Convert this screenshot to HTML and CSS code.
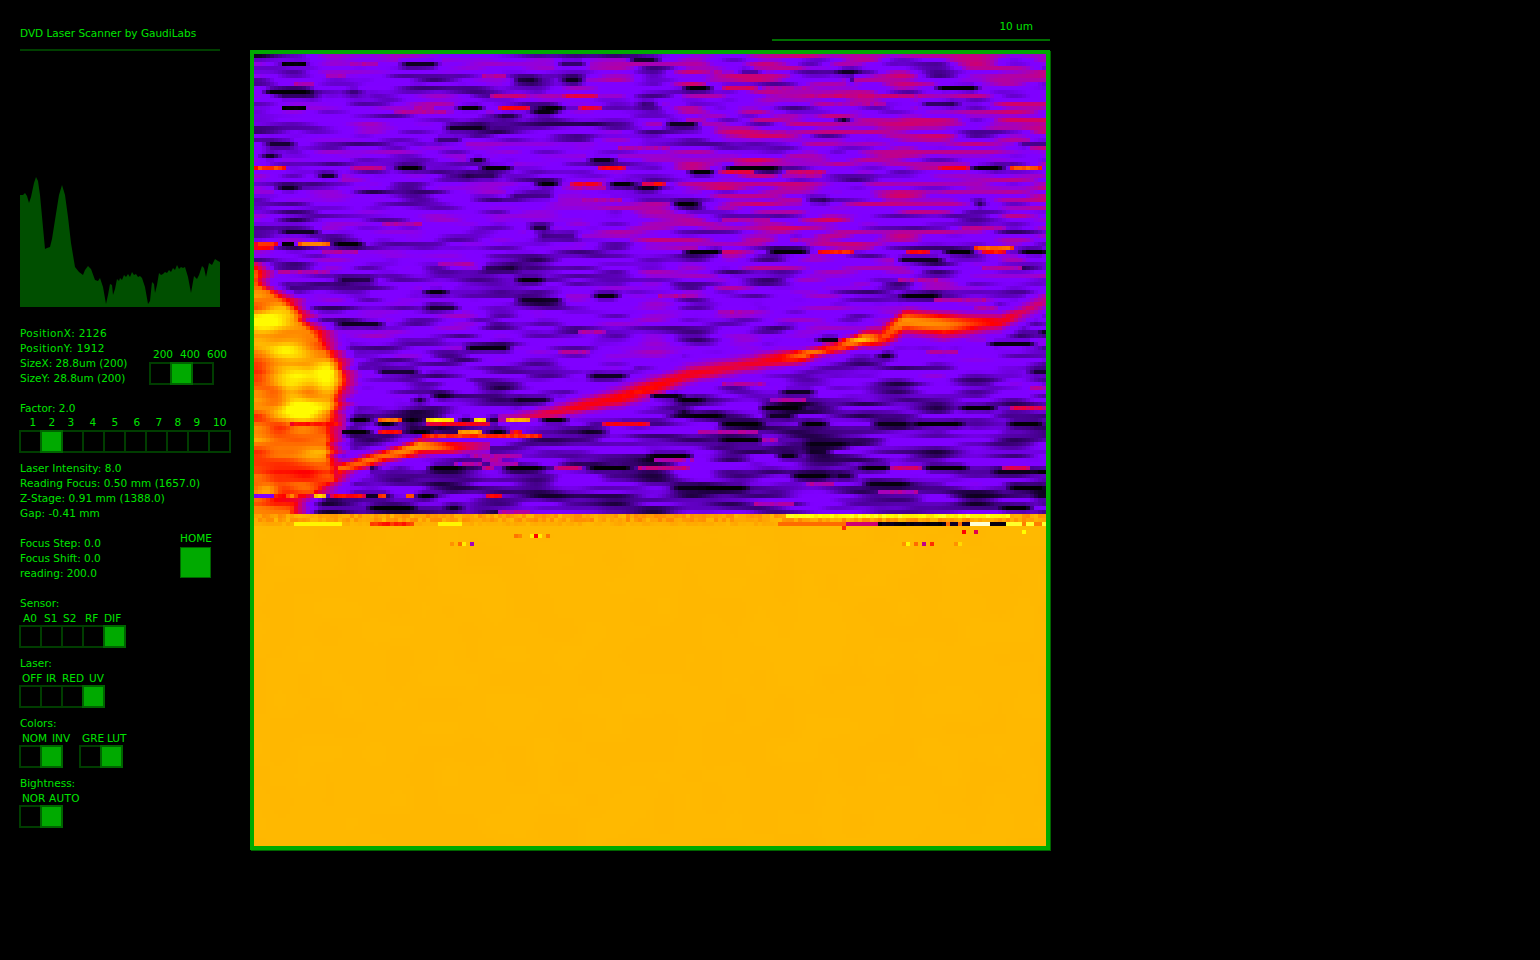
FILE: index.html
```html
<!DOCTYPE html>
<html lang="en">
<head>
<meta charset="UTF-8">
<meta name="viewport" content="width=device-width, initial-scale=1.0">
<title>DVD Laser Scanner by GaudiLabs</title>
<link rel="stylesheet" href="styles.css">
</head>
<body>
<div class="panel">
  <div class="title">DVD Laser Scanner by GaudiLabs</div>
  <svg class="histogram" width="200" height="131" viewBox="0 0 200 131">
    <polygon points="0,18 3,18 5,16 7,19 9,26 11,20 14,6 16,0 18,4 20,18 25,72 27,71 30,70 32,62 35,43 39,18 42,8 45,18 48,40 51,66 55,90 59,95 63,98 65,93 68,89 71,92 75,103 78,104 80,101 83,110 86,127 88,118 90,107 92,108 93,118 95,112 97,102 99,104 100,101 102,103 104,98 106,100 108,97 110,100 112,95 114,98 116,97 118,100 120,99 122,101 125,110 128,127 130,124 132,105 134,107 135,116 137,108 139,96 141,98 143,97 145,95 147,96 149,93 151,95 153,91 155,93 157,88 159,92 161,90 163,91 165,90 168,100 171,116 174,99 177,102 179,98 182,89 184,91 186,100 189,86 192,88 195,82 198,84 200,85 200,130 0,130"/>
  </svg>

  <div class="split">
    <div class="lines stats">
      <div class="spaced">PositionX: 2126</div>
      <div class="spaced">PositionY: 1912</div>
      <div>SizeX: 28.8um (200)</div>
      <div>SizeY: 28.8um (200)</div>
    </div>
    <div class="size-control">
      <div class="labels size-labels"><span>200</span><span>400</span><span>600</span></div>
      <div class="toggle"><i></i><i class="on"></i><i></i></div>
    </div>
  </div>

  <div class="lines group">Factor: 2.0</div>
  <div class="labels factor-labels"><span>1</span><span>2</span><span>3</span><span>4</span><span>5</span><span>6</span><span>7</span><span>8</span><span>9</span><span>10</span></div>
  <div class="toggle"><i></i><i class="on"></i><i></i><i></i><i></i><i></i><i></i><i></i><i></i><i></i></div>

  <div class="lines readings">
    <div>Laser Intensity: 8.0</div>
    <div>Reading Focus: 0.50 mm (1657.0)</div>
    <div>Z-Stage: 0.91 mm (1388.0)</div>
    <div>Gap: -0.41 mm</div>
  </div>

  <div class="split focus">
    <div class="lines focus-lines">
      <div>Focus Step: 0.0</div>
      <div>Focus Shift: 0.0</div>
      <div>reading: 200.0</div>
    </div>
    <div class="home">
      <div class="home-label">HOME</div>
      <div class="home-button"></div>
    </div>
  </div>

  <div class="lines group">Sensor:</div>
  <div class="labels sensor-labels"><span>A0</span><span>S1</span><span>S2</span><span>RF</span><span>DIF</span></div>
  <div class="toggle"><i></i><i></i><i></i><i></i><i class="on"></i></div>

  <div class="lines group-tight">Laser:</div>
  <div class="labels laser-labels"><span>OFF</span><span>IR</span><span>RED</span><span>UV</span></div>
  <div class="toggle"><i></i><i></i><i></i><i class="on"></i></div>

  <div class="lines group-tight">Colors:</div>
  <div class="color-groups">
    <div>
      <div class="labels pair-labels"><span>NOM</span><span>INV</span></div>
      <div class="toggle"><i></i><i class="on"></i></div>
    </div>
    <div>
      <div class="labels lut-labels"><span>GRE</span><span>LUT</span></div>
      <div class="toggle"><i></i><i class="on"></i></div>
    </div>
  </div>

  <div class="lines group-tight">Bightness:</div>
  <div class="labels auto-labels"><span>NOR</span><span class="spaced">AUTO</span></div>
  <div class="toggle"><i></i><i class="on"></i></div>
</div>

<div class="viewer">
  <div class="scale">10 um</div>
  <div class="frame"><canvas id="scan" width="792" height="792"></canvas></div>
</div>
<script src="script.js"></script>
</body>
</html>
```

FILE: styles.css
```css
body { margin: 0; background-color: #000; color: #00e400; font-family: "DejaVu Sans", sans-serif; font-size: 10.5px; line-height: 15px; display: flex; min-height: 100vh; }
.panel { width: 230px; padding: 26px 0 0 20px; flex: none; }
.title { width: 200px; padding-bottom: 8px; border-bottom: 2px solid #003f00; box-sizing: content-box; white-space: nowrap; }
.histogram { display: block; margin-top: 126px; }
.histogram polygon { fill: #004f00; }
.split { display: flex; }
.stats { width: 130px; margin-top: 18px; white-space: nowrap; }
.spaced { letter-spacing: 0.35px; }
.size-control { margin-top: 38px; }
.lines { white-space: nowrap; }
.labels { display: grid; grid-auto-flow: column; justify-content: start; line-height: 14px; height: 14px; white-space: nowrap; }
.size-labels { grid-template-columns: 27px 27px auto; padding-left: 3px; height: 16px; line-height: 16px; }
.factor-labels { grid-template-columns: 19px 19px 22px 22px 22px 22px 19px 19px 19.5px auto; padding-left: 9.5px; line-height: 12px; }
.sensor-labels { grid-template-columns: 21px 19px 22px 19px auto; padding-left: 3px; }
.laser-labels { grid-template-columns: 24px 16px 27px auto; padding-left: 2px; }
.pair-labels { grid-template-columns: 30px auto; padding-left: 2px; }
.lut-labels { grid-template-columns: 25px auto; padding-left: 2px; }
.auto-labels { grid-template-columns: 27px auto; padding-left: 2px; }
.toggle { display: flex; margin-left: -1px; }
.toggle i { display: block; flex: none; width: 23px; height: 23px; margin-right: -2px; box-sizing: border-box; border: 2px solid #003d00; }
.toggle i.on { background-color: #00aa00; border-color: #006400; position: relative; }
.group { margin-top: 15px; }
.group-tight { margin-top: 8px; }
.readings { margin-top: 8px; letter-spacing: 0.06px; }
.focus { margin-top: 15px; }
.focus-lines { width: 160px; }
.home { margin-top: -5px; }
.home-label { height: 16px; }
.home-button { width: 31px; height: 31px; box-sizing: border-box; background-color: #00aa00; border: 1px solid #006400; }
.color-groups { display: flex; gap: 20px; width: 120px; }
.color-groups > div { width: 40px; }
.viewer { width: 800px; flex: none; padding-top: 19px; }
.scale { width: 278px; margin-left: auto; padding-bottom: 5px; margin-bottom: 9px; border-bottom: 2px solid #006e00; box-sizing: border-box; height: 22px; text-align: right; padding-right: 17px; }
.frame { width: 792px; height: 792px; border: 4px solid #00aa00; box-shadow: 1px 1px 0 #006400; }
canvas { display: block; }
```

FILE: script.js
```js
// false colour view of one scan, 4px per sample
var canvas = document.getElementById("scan");
var ctx = canvas.getContext("2d");
var COLS = 198, ROWS = 198, CELL = 4;

var stops = [
  [0, 0, 0, 0], [0.12, 20, 0, 44], [0.3, 90, 0, 181], [0.38, 127, 0, 255], [0.44, 128, 0, 255],
  [0.52, 176, 0, 168], [0.6, 224, 0, 80], [0.65, 255, 0, 0], [0.72, 255, 106, 0],
  [0.8, 255, 184, 0], [0.88, 255, 255, 0], [1, 255, 255, 255]
];

function lut(v) {
  v = Math.max(0, Math.min(1, v));
  for (var i = 1; i < stops.length; i++) {
    if (v <= stops[i][0]) {
      var a = stops[i - 1], b = stops[i];
      var t = (v - a[0]) / (b[0] - a[0]);
      return "rgb(" + Math.round(a[1] + (b[1] - a[1]) * t) + "," + Math.round(a[2] + (b[2] - a[2]) * t) + "," + Math.round(a[3] + (b[3] - a[3]) * t) + ")";
    }
  }
  return "#fff";
}

function hash(x, y) {
  var s = Math.sin(x * 127.1 + y * 311.7) * 43758.5453;
  return s - Math.floor(s);
}

function noise(x, y) {
  var ix = Math.floor(x), iy = Math.floor(y);
  var fx = x - ix, fy = y - iy;
  fx = fx * fx * (3 - 2 * fx);
  fy = fy * fy * (3 - 2 * fy);
  var a = hash(ix, iy) + (hash(ix + 1, iy) - hash(ix, iy)) * fx;
  var b = hash(ix, iy + 1) + (hash(ix + 1, iy + 1) - hash(ix, iy + 1)) * fx;
  return a + (b - a) * fy;
}

// page coordinates of the two bright traces: x, y, half width, peak
var traces = [
  [[340, 470, 13, 0.72], [380, 458, 12, 0.72], [420, 447, 13, 0.78], [450, 448, 9, 0.68], [490, 446, 6, 0.52]],
  [[500, 420, 6, 0.54], [560, 410, 11, 0.62], [620, 397, 18, 0.66], [690, 374, 18, 0.64], [735, 365, 14, 0.62],
   [780, 358, 15, 0.66], [805, 355, 13, 0.75], [835, 347, 13, 0.67], [862, 339, 12, 0.82], [880, 338, 18, 0.68],
   [905, 322, 20, 0.76], [945, 326, 22, 0.74], [1000, 322, 15, 0.65], [1046, 300, 12, 0.55]]
];

// right hand edge of the blob on the left, x for each y
var edge = [[262, 254], [285, 270], [300, 290], [318, 305], [345, 334], [380, 346], [420, 338], [455, 336], [480, 345], [500, 310], [512, 300]];

var hot = [
  [268, 322, 28, 11, 0.2], [283, 349, 18, 11, 0.17], [327, 380, 14, 15, 0.17], [300, 375, 18, 11, 0.15],
  [300, 410, 24, 9, 0.2], [290, 392, 14, 10, 0.1], [315, 455, 18, 9, 0.08], [268, 490, 10, 6, 0.08]
];

// y, x0, x1, value
var segs = [
  [88, 723, 757, 0.59], [88, 937, 977, 0.02], [88, 687, 710, 0.04], [94, 490, 530, 0.56], [94, 563, 597, 0.6],
  [96, 813, 917, 0.56], [92, 265, 310, 0.04], [64, 282, 305, 0.02], [108, 282, 305, 0.02], [108, 458, 480, 0.02], [108, 498, 530, 0.64],
  [108, 540, 563, 0.02], [108, 578, 600, 0.62], [168, 254, 285, 0.69], [168, 350, 385, 0.55], [168, 397, 420, 0.02],
  [168, 483, 510, 0.02], [168, 597, 627, 0.65], [168, 727, 777, 0.02], [168, 937, 968, 0.64], [168, 975, 1002, 0.0],
  [168, 1010, 1042, 0.71], [172, 690, 713, 0.01], [172, 723, 753, 0.61], [172, 787, 827, 0.57],
  [184, 650, 667, 0.65], [184, 538, 558, 0.02], [184, 570, 602, 0.63], [184, 610, 633, 0.0], [184, 642, 650, 0.63], [204, 675, 698, 0.03],
  [244, 254, 277, 0.68], [244, 282, 293, 0], [244, 298, 330, 0.74], [244, 335, 362, 0],
  [248, 254, 275, 0.66], [248, 975, 1013, 0.72], [252, 687, 723, 0.02], [252, 770, 807, 0.01], [252, 817, 853, 0.67],
  [252, 907, 930, 0.65], [252, 947, 973, 0.01], [252, 983, 1007, 0.66], [252, 1023, 1046, 0.01],
  [420, 350, 370, 0], [420, 378, 402, 0.73], [420, 407, 418, 0], [420, 427, 453, 0.86], [420, 462, 470, 0],
  [420, 474, 486, 0.86], [420, 490, 498, 0], [420, 507, 530, 0.8], [420, 542, 565, 0.01],
  [424, 377, 393, 0], [424, 427, 490, 0.63], [424, 603, 650, 0.64], [424, 290, 340, 0.66],
  [432, 347, 370, 0], [432, 378, 402, 0.65], [432, 410, 430, 0], [432, 458, 482, 0.78], [432, 490, 507, 0], [432, 510, 520, 0.65],
  [436, 423, 540, 0.68], [468, 430, 462, 0.01], [468, 480, 492, 0.56], [468, 507, 540, 0], [468, 553, 583, 0.57],
  [468, 590, 630, 0.01], [468, 638, 650, 0.62], [456, 650, 690, 0.02],
  [494, 254, 274, 0.42], [496, 286, 298, 0.74], [496, 313, 327, 0.85], [496, 330, 365, 0.65], [496, 378, 386, 0.72],
  [496, 406, 414, 0.74], [496, 418, 433, 0.01], [496, 485, 502, 0.66], [508, 371, 415, 0.02],
  [424, 720, 760, 0.02], [416, 690, 720, 0.02], [408, 760, 800, 0.01], [424, 800, 825, 0.02], [468, 640, 690, 0.56],
  [468, 890, 920, 0.58], [468, 1000, 1030, 0.6], [468, 860, 890, 0.01], [468, 927, 965, 0.01], [424, 913, 960, 0.02], [424, 1010, 1042, 0.01],
  [408, 1010, 1046, 0.6], [408, 960, 992, 0.02], [440, 720, 760, 0.02], [488, 700, 745, 0.01], [488, 1010, 1046, 0.02], [508, 1000, 1030, 0.02]
];

var specks = [
  [514, 535, 0.73], [518, 535, 0.75], [530, 535, 0.86], [534, 535, 0.65], [538, 535, 0.86], [546, 535, 0.73],
  [450, 543, 0.76], [458, 543, 0.72], [462, 543, 0.86], [470, 543, 0.5],
  [963, 531, 0.65], [975, 531, 0.6], [1022, 531, 0.88], [842, 527, 0.68],
  [903, 543, 0.76], [907, 543, 0.87], [914, 543, 0.72], [923, 543, 0.55], [931, 543, 0.68], [955, 543, 0.76], [960, 543, 0.84]
];

function edgeAt(y) {
  if (y < edge[0][0] || y > edge[edge.length - 1][0]) return 0;
  for (var i = 1; i < edge.length; i++) {
    if (y <= edge[i][0]) {
      var t = (y - edge[i - 1][0]) / (edge[i][0] - edge[i - 1][0]);
      return edge[i - 1][1] + (edge[i][1] - edge[i - 1][1]) * t;
    }
  }
  return 0;
}

function traceAt(x, y) {
  var best = 0;
  for (var k = 0; k < traces.length; k++) {
    var tr = traces[k];
    for (var i = 1; i < tr.length; i++) {
      if (x >= tr[i - 1][0] && x <= tr[i][0]) {
        var t = (x - tr[i - 1][0]) / (tr[i][0] - tr[i - 1][0]);
        var cy = tr[i - 1][1] + (tr[i][1] - tr[i - 1][1]) * t;
        var w = tr[i - 1][2] + (tr[i][2] - tr[i - 1][2]) * t;
        var p = tr[i - 1][3] + (tr[i][3] - tr[i - 1][3]) * t;
        var d = (y - cy) / w;
        // core plus a wide pink halo
        var core = p * Math.exp(-d * d);
        var halo = 0.54 * Math.exp(-d * d / 3);
        best = Math.max(best, core, halo);
      }
    }
  }
  return best;
}

function sample(col, row) {
  var x = 254 + col * CELL + 2, y = 54 + row * CELL + 2;
  var n1 = noise(col / 9, row * 7.3);
  var n2 = noise(col / 10, row / 1.7);
  var n3 = noise(col / 5 + 40, row * 3.1);
  var v = 0.385 + (n1 - 0.5) * 0.22 + (n2 - 0.5) * 0.3 + (n3 - 0.5) * 0.06;

  // values above the purple plateau are rare
  if (v > 0.44) v = 0.44 + (v - 0.44) * 0.4;

  // top right is warmer, the lower half darker
  var warm = Math.min(1, Math.max(0, (x - 560) / 160)) * Math.min(1, Math.max(0, (310 - y) / 80));
  v += warm * (0.02 + n1 * 0.09);
  if (y > 350) v -= 0.07 * Math.min(1, (y - 350) / 60);

  var e = edgeAt(y);
  if (e > 0) {
    var d = e - x;
    if (d > -18) {
      var inner = 0.73 + (noise(col / 6, row / 3) - 0.5) * 0.12 + (n1 - 0.5) * 0.03;
      if (y > 470) inner -= 0.05;
      var f = Math.min(1, (d + 18) / 30);
      v = v + (inner - v) * f;
    }
    if (d > 0) {
      for (var i = 0; i < hot.length; i++) {
        var h = hot[i];
        var dx = (x - h[0]) / h[2], dy = (y - h[1]) / h[3];
        v += h[4] * Math.exp(-dx * dx - dy * dy);
      }
      v = Math.min(v, 0.875);
    }
  }
  var tv = traceAt(x, y + (n2 - 0.5) * 4);
  if (tv > 0) v = Math.max(v, tv + (n1 - 0.5) * 0.03);
  return v;
}

// band where the scan runs off the edge of the track
function bandSample(col, row, x) {
  var n = hash(col, row + 500);
  if (row === 115) {
    if (x > 785 && x < 1010) return 0.85 + n * 0.05;
    return 0.75 + n * 0.05;
  }
  if (row === 116) return 0.75 + n * 0.05;
  if (x >= 293 && x < 342) return 0.87;
  if (x >= 370 && x < 413) return 0.65 + n * 0.05;
  if (x >= 438 && x < 462) return 0.87;
  if (x >= 775 && x < 843) return 0.72;
  if (x >= 843 && x < 877) return 0.57;
  if (x >= 877 && x < 943) return n * 0.12;
  if (x >= 943 && x < 970) return n > 0.5 ? 0.72 : 0.1;
  if (x >= 970 && x < 990) return 0.98;
  if (x >= 990 && x < 1004) return 0.04;
  if (x >= 1004 && x < 1046) return n > 0.4 ? 0.9 : 0.74;
  return 0.78 + n * 0.02;
}

var grid = [];
for (var r = 0; r < ROWS; r++) {
  grid[r] = [];
  for (var c = 0; c < COLS; c++) {
    var px = 254 + c * CELL;
    if (r < 115) grid[r][c] = sample(c, r);
    else if (r < 118) grid[r][c] = bandSample(c, r, px);
    else grid[r][c] = 0.8 + (noise(c / 6, r / 6) - 0.5) * 0.003;
  }
}

// darken a dash softly, with a dim row above and below it
function darkDash(row, c0, c1, depth) {
  for (var c = Math.max(c0, 0); c < c1 && c < COLS; c++) {
    if (grid[row][c] > 0.52) continue;
    var edgeDist = Math.min(c - c0, c1 - 1 - c);
    var fade = Math.min(1, (edgeDist + 1) / 3);
    grid[row][c] = grid[row][c] * (1 - fade * depth) + 0.01;
    if (row > 0 && grid[row - 1][c] < 0.5) grid[row - 1][c] *= 1 - fade * 0.22;
    if (row < 114 && grid[row + 1][c] < 0.5) grid[row + 1][c] *= 1 - fade * 0.22;
  }
}

// random dark dashes and warmer dashes, as in the raw reading noise
for (var n = 0; n < 130; n++) {
  var sr = Math.floor(hash(n, 1) * 115);
  var sc = Math.floor(hash(n, 2) * COLS);
  var len = 5 + Math.floor(hash(n, 3) * 9);
  if (hash(n, 4) < 0.65) {
    var deep = sr > 55 ? 0.6 + hash(n, 5) * 0.4 : 0.4 + hash(n, 5) * 0.45;
    darkDash(sr, sc, sc + len, deep);
  } else {
    for (var j = 0; j < len && sc + j < COLS; j++) {
      if (grid[sr][sc + j] < 0.52) grid[sr][sc + j] = 0.49 + hash(sc + j, sr) * 0.05;
    }
  }
}

segs.forEach(function (s) {
  var row = Math.floor((s[0] - 54) / CELL);
  var c0 = Math.round((s[1] - 254) / CELL), c1 = Math.round((s[2] - 254) / CELL);
  if (s[3] < 0.1 && s[0] < 510 && s[1] !== 282) {
    for (var k = c0; k < c1 && k < COLS; k++) grid[row][k] = Math.min(grid[row][k], 0.5);
    darkDash(row, c0 - 1, c1 + 1, 1);
    return;
  }
  for (var c = c0; c < c1 && c < COLS; c++) {
    var jitter = (hash(c, row + 900) - 0.5) * (s[3] < 0.1 ? 0.02 : 0.03);
    var soft = (c === c0 || c === c1 - 1) ? -0.04 : 0;
    grid[row][c] = Math.max(0, s[3] + jitter + soft);
  }
});

specks.forEach(function (s) {
  var row = Math.floor((s[1] - 54) / CELL);
  var c = Math.floor((s[0] - 254) / CELL);
  grid[row][c] = s[2];
});

for (var ry = 0; ry < ROWS; ry++) {
  for (var cx = 0; cx < COLS; cx++) {
    ctx.fillStyle = lut(grid[ry][cx]);
    ctx.fillRect(cx * CELL, ry * CELL, CELL, CELL);
  }
}
```
